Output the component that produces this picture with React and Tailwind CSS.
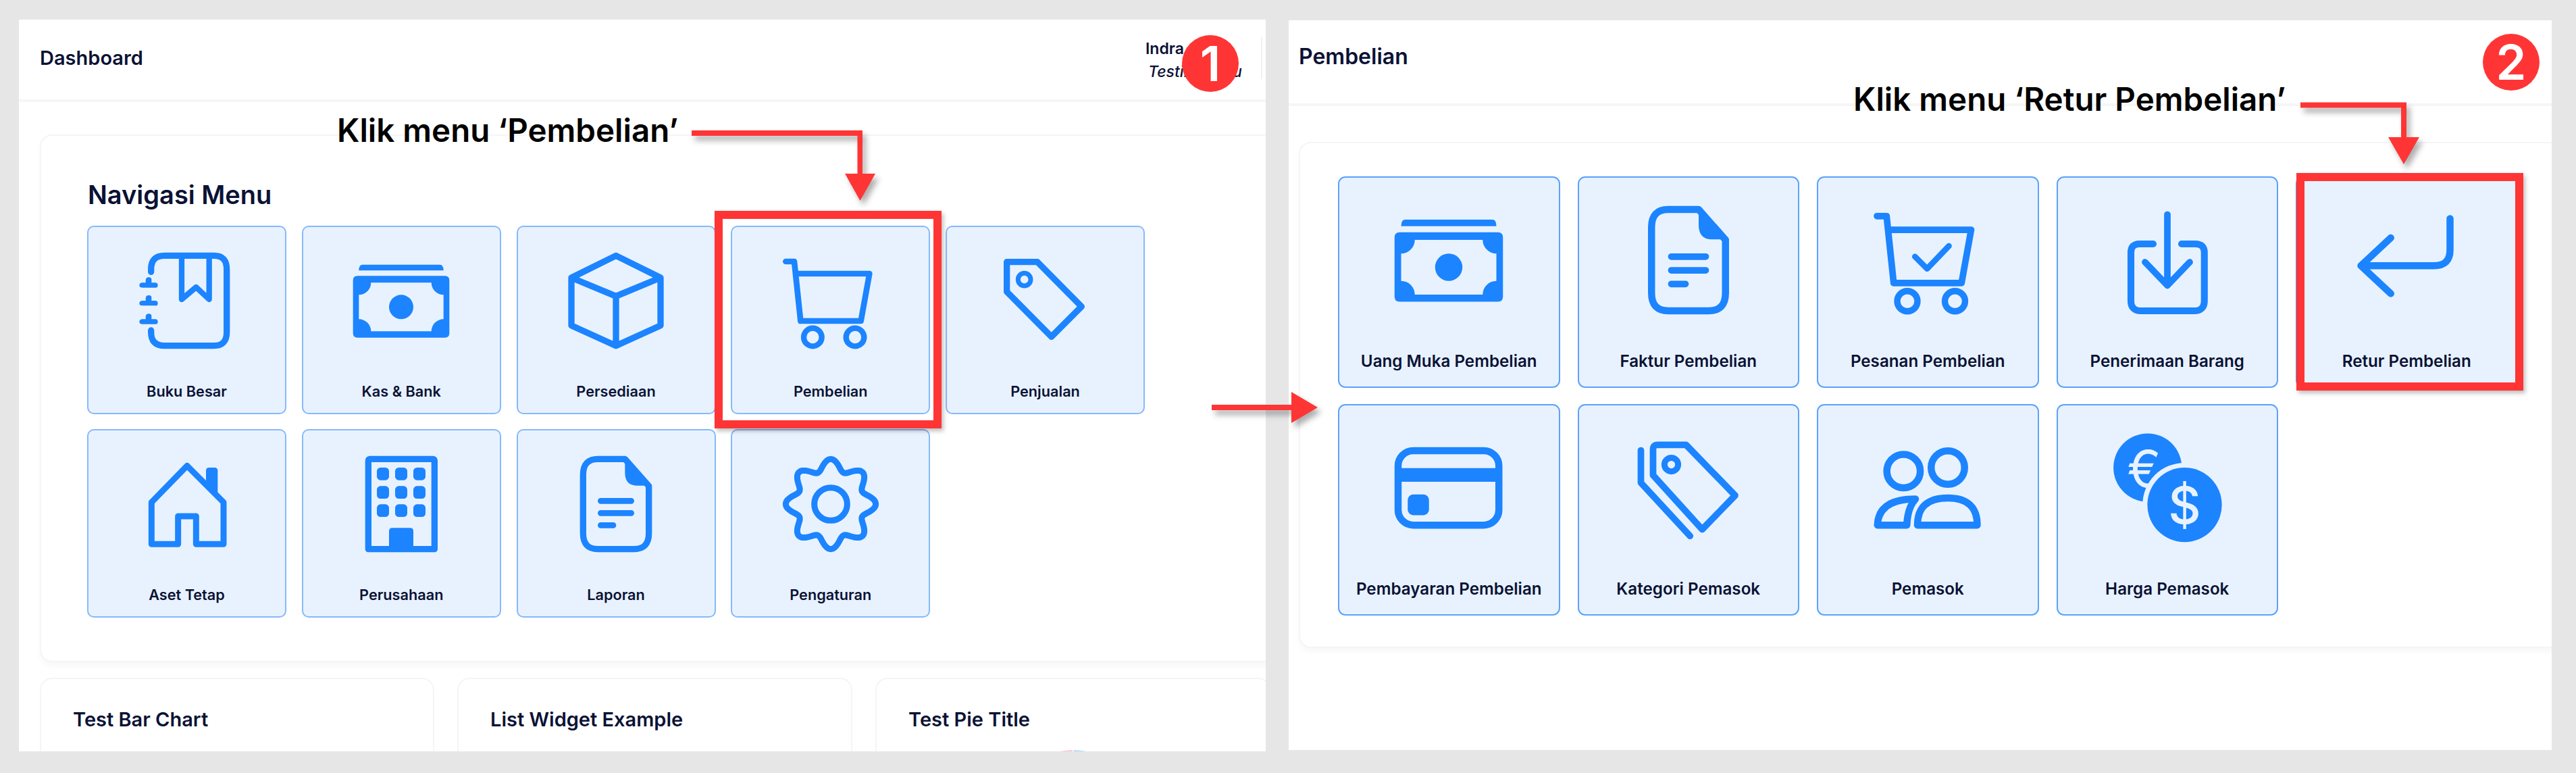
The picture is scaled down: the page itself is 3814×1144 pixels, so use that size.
import React from 'react';

const INK = 'text-[#0b1235]';

// gear outline, 8 soft lobes
const gearPath = () => {
  const pts = [];
  for (let i = 0; i < 144; i++) {
    const t = (i / 144) * Math.PI * 2;
    const r = 8.75 + 1.25 * Math.cos(8 * t);
    pts.push(`${(12 + r * Math.sin(t)).toFixed(2)} ${(12 - r * Math.cos(t)).toFixed(2)}`);
  }
  return `M${pts.join('L')}Z`;
};

const Svg = ({ size, children }) => (
  <svg
    viewBox="0 0 24 24"
    width={size}
    height={size}
    fill="none"
    stroke="currentColor"
    strokeWidth="1.4"
    strokeLinecap="round"
    strokeLinejoin="round"
    className="shrink-0 text-[#1c84ff]"
  >
    {children}
  </svg>
);

const Solid = (props) => <path fill="currentColor" stroke="none" {...props} />;

const money = (
  <>
    <Solid d="M3.4 4H20.6Q21.4 4 21.4 5.3H2.6Q2.6 4 3.4 4Z" />
    <Solid
      fillRule="evenodd"
      d="M2.3 6.5H21.7Q22.7 6.5 22.7 7.5V19.2Q22.7 20.2 21.7 20.2H2.3Q1.3 20.2 1.3 19.2V7.5Q1.3 6.5 2.3 6.5ZM5.3 8H18.7A2.7 2.7 0 0 0 21.4 10.7V16.1A2.7 2.7 0 0 0 18.7 18.8H5.3A2.7 2.7 0 0 0 2.6 16.1V10.7A2.7 2.7 0 0 0 5.3 8Z"
    />
    <circle cx="12" cy="13.4" r="2.7" fill="currentColor" stroke="none" />
  </>
);

const doc = (
  <>
    <path d="M8 2H14L19.3 8V18.5Q19.3 22 16 22H8Q4.7 22 4.7 18.5V5.5Q4.7 2 8 2Z" />
    <Solid d="M14 1.4L20 7.9H16.6Q14 7.9 14 5Z" />
    <path strokeWidth="1.3" d="M8.6 11.3H15.4M8.6 14H15.4M8.6 16.7H11.4" />
  </>
);

const cartBody = (
  <>
    <path strokeWidth="1.3" d="M2 3.3H3.9L5.3 16.5H18.7L20.6 6H4.6" />
    <circle cx="8" cy="20.1" r="2" strokeWidth="1.25" />
    <circle cx="17.4" cy="20.1" r="2" strokeWidth="1.25" />
  </>
);

const icons = {
  book: (
    <>
      <path d="M4 5.6V5Q4 2 7 2H18Q20.8 2 20.8 5V19Q20.8 22 18 22H7Q4 22 4 19V18.6" />
      <path strokeWidth="1.25" d="M10.8 2V11.7L14 9L16.9 11.7V2" />
      <Solid d="M2.8 8V7.5Q2.8 6.8 3.5 6.8T4.1 7.5V8H4.9Q5.5 8 5.5 8.6T4.9 9.1H2Q1.4 9.1 1.4 8.6T2 8Z" />
      <Solid d="M2.8 12V11.5Q2.8 10.8 3.5 10.8T4.1 11.5V12H4.9Q5.5 12 5.5 12.6T4.9 13.1H2Q1.4 13.1 1.4 12.6T2 12Z" />
      <Solid d="M2.8 16.1V15.6Q2.8 14.9 3.5 14.9T4.1 15.6V16.1H4.9Q5.5 16.1 5.5 16.7T4.9 17.2H2Q1.4 17.2 1.4 16.7T2 16.1Z" />
    </>
  ),
  money,
  box: <path strokeWidth="1.4" d="M12 2L21.9 6.9V17.5L12 22L2.1 17.5V6.9ZM2.1 6.9L12 11L21.9 6.9M12 11V22" />,
  cart: cartBody,
  tag: (
    <>
      <path d="M3.4 3.4H10.2L20 13.3L13.3 20L3.4 10Z" />
      <circle cx="7.3" cy="7.3" r="1.4" strokeWidth="1.05" />
    </>
  ),
  house: (
    <>
      <path strokeWidth="1.35" d="M4.1 11.6L12 3.5L20.1 11.6V20.9H14V14.7H10V20.9H4.1Z" />
      <Solid d="M16.2 4.6Q16.2 3.9 16.9 3.9H18.1Q18.8 3.9 18.8 4.6V10.5L16.2 8Z" />
    </>
  ),
  building: (
    <>
      <path strokeWidth="1.4" d="M5 2H19.1Q19.4 2 19.4 2.4V22H4.7V2.4Q4.7 2 5 2Z" />
      {[6.6, 10.65, 14.7].map((x) =>
        [3.9, 8, 12.05].map((y) => <rect key={`${x}-${y}`} x={x} y={y} width="2.7" height="2.8" rx="0.8" fill="currentColor" stroke="none" />)
      )}
      <Solid d="M9.3 22V18Q9.3 17.3 10 17.3H14Q14.7 17.3 14.7 18V22Z" />
    </>
  ),
  doc,
  gear: (
    <>
      <path strokeWidth="1.35" d={gearPath()} />
      <circle cx="12" cy="12" r="3.65" strokeWidth="1.35" />
    </>
  ),
  cartCheck: (
    <>
      {cartBody}
      <path strokeWidth="1.15" d="M9.5 11.3L11.9 13.7L16.2 9.2" />
    </>
  ),
  inbox: (
    <>
      <path strokeWidth="1.3" d="M12 3V17L7.6 12.4M12 17L16.4 12.4" />
      <path strokeWidth="1.35" d="M9.2 8.8H6.5Q4.8 8.8 4.8 10.5V20Q4.8 22 6.8 22H17.3Q19.3 22 19.3 20V10.5Q19.3 8.8 17.5 8.8H14.8" />
    </>
  ),
  retur: <path strokeWidth="1.4" d="M20.6 3.8V10Q20.6 13.1 17.4 13.1H3M8.9 7.6L3 13.1L8.9 18.6" />,
  card: (
    <>
      <rect x="2" y="4.65" width="19.9" height="14.7" rx="3" />
      <Solid d="M1.4 8.1H22.5V10.8H1.4Z" />
      <rect x="3.9" y="13.3" width="4.2" height="4.1" rx="1.1" fill="currentColor" stroke="none" />
    </>
  ),
  tags: (
    <>
      <path strokeWidth="1.3" d="M5 4.4Q5 3.5 5.9 3.5H11.5L21.2 13.5L14.7 20.2L5 9.5Z" />
      <circle cx="8.6" cy="7.4" r="1.35" strokeWidth="1.2" />
      <path strokeWidth="1.3" d="M2.6 4.6V11L12.3 21.5" />
    </>
  ),
  users: (
    <>
      <circle cx="7.25" cy="8.7" r="3.3" />
      <circle cx="16" cy="8" r="3.3" />
      <path d="M10 19.35Q10 14 16 14Q21.8 14 21.8 19.35Z" />
      <path d="M2.1 19.35Q2.3 14.2 9.6 14.2Q8 16 7.9 19.35Z" />
    </>
  ),
  coins: (
    <>
      <circle cx="8.1" cy="8" r="6.75" fill="currentColor" stroke="none" />
      <text x="7.4" y="11.9" textAnchor="middle" fontSize="10" fontWeight="400" fill="#e8f2ff" stroke="none" fontFamily="Inter, sans-serif">€</text>
      <circle cx="15.4" cy="15.35" r="8.3" fill="#e8f2ff" stroke="none" />
      <circle cx="15.4" cy="15.35" r="7.35" fill="currentColor" stroke="none" />
      <text x="15.4" y="19" textAnchor="middle" fontSize="10" fontWeight="500" fill="#e8f2ff" stroke="none" fontFamily="Inter, sans-serif">$</text>
    </>
  ),
};

const dashMenu = [
  ['Buku Besar', 'book'],
  ['Kas & Bank', 'money'],
  ['Persediaan', 'box'],
  ['Pembelian', 'cart'],
  ['Penjualan', 'tag'],
  ['Aset Tetap', 'house'],
  ['Perusahaan', 'building'],
  ['Laporan', 'doc'],
  ['Pengaturan', 'gear'],
];

const buyMenu = [
  ['Uang Muka Pembelian', 'money'],
  ['Faktur Pembelian', 'doc'],
  ['Pesanan Pembelian', 'cartCheck'],
  ['Penerimaan Barang', 'inbox'],
  ['Retur Pembelian', 'retur'],
  ['Pembayaran Pembelian', 'card'],
  ['Kategori Pemasok', 'tags'],
  ['Pemasok', 'users'],
  ['Harga Pemasok', 'coins'],
];

const DashTile = ({ label, icon }) => (
  <div className="h-[279px] flex flex-col items-center rounded-[10px] border-2 border-[#86b9fb] bg-[#e8f2ff] pt-[29px]">
    <Svg size={160}>{icons[icon]}</Svg>
    <span className={`mt-[40px] text-[21.7px] leading-[28px] font-semibold ${INK}`}>{label}</span>
  </div>
);

const BuyTile = ({ label, icon }) => (
  <div className="h-[313px] flex flex-col items-center rounded-[11px] border-2 border-[#5ca2fb] bg-[#e8f2ff] pt-[32px]">
    <Svg size={180}>{icons[icon]}</Svg>
    <span className={`mt-[44px] text-[24.2px] leading-[32px] font-semibold ${INK}`}>{label}</span>
  </div>
);

const Widget = ({ title, children }) => (
  <div className="h-[300px] rounded-t-[18px] border-2 border-[#f5f5f6] bg-white pl-[47px] pt-[42px]">
    <h3 className={`text-[29px] leading-[36px] font-semibold ${INK}`}>{title}</h3>
    {children}
  </div>
);

const ArrowShadow = 'drop-shadow-[5px_7px_4px_rgba(0,0,0,0.32)]';

const App = () => {
  return (
    <div className="relative h-[1144px] w-full overflow-hidden bg-[#e6e6e6] font-['Inter',sans-serif]">
      <div className="flex items-start gap-[34px] pl-[28px] pt-[29px]">
        {/* left screen: dashboard */}
        <section className="h-[1083px] w-[1846px] shrink-0 overflow-hidden bg-white">
          <header className="flex h-[122px] items-center justify-between border-b-[4px] border-[#f6f6f7] pb-[4px] pl-[31px]">
            <h1 className={`text-[29px] leading-[36px] font-semibold ${INK}`}>Dashboard</h1>
            <div className="flex h-[62px] items-stretch">
              <div className={`w-[141px] text-[23px] leading-[34px] ${INK}`}>
                <p className="font-semibold">Indra</p>
                <p className="ml-[4px] font-medium italic whitespace-nowrap">Testing Baru</p>
              </div>
              <div className="ml-[30px] mr-[5px] w-[2px] bg-[#f1f1f3]" />
            </div>
          </header>
          <main className="pl-[31px] pt-[48px]">
            <div className="h-[781px] w-[1900px] rounded-[18px] border-2 border-[#f5f5f6] bg-white pl-[68px] pt-[62px] shadow-[0_6px_10px_rgba(0,0,0,0.03)]">
              <h2 className={`ml-px text-[38px] leading-[50px] font-semibold ${INK}`}>Navigasi Menu</h2>
              <div className="mt-[21px] grid grid-cols-[repeat(5,295px)] gap-x-[22.75px] gap-y-[22px]">
                {dashMenu.map(([label, icon]) => (
                  <DashTile key={label} label={label} icon={icon} />
                ))}
              </div>
            </div>
            <div className="mt-[23px] grid w-[1900px] grid-cols-[584px_585px_585px] gap-x-[34px]">
              <Widget title="Test Bar Chart" />
              <Widget title="List Widget Example" />
              <Widget title="Test Pie Title">
                <svg className="ml-[164px] mt-[27px]" width="160" height="160" viewBox="0 0 160 160">
                  <path d="M79 80V0A80 80 0 0 0 79 160Z" fill="#ffc4d0" />
                  <path d="M81 80V0A80 80 0 0 1 81 160Z" fill="#b0d8f8" />
                </svg>
              </Widget>
            </div>
          </main>
        </section>

        {/* right screen: pembelian */}
        <section className="mt-px h-[1080px] w-[1870px] shrink-0 overflow-hidden bg-white">
          <header className="flex h-[127px] items-center border-b-[4px] border-[#f6f6f7] pb-[15px] pl-[15px]">
            <h1 className={`text-[32px] leading-[40px] font-semibold ${INK}`}>Pembelian</h1>
          </header>
          <main className="pl-[15px] pt-[53px]">
            <div className="h-[749px] w-[1900px] rounded-[18px] border-2 border-[#f5f5f6] bg-white pl-[56px] pt-[49px] shadow-[0_6px_10px_rgba(0,0,0,0.03)]">
              <div className="grid grid-cols-[repeat(5,328.5px)] gap-x-[26px] gap-y-[24px]">
                {buyMenu.map(([label, icon]) => (
                  <BuyTile key={label} label={label} icon={icon} />
                ))}
              </div>
            </div>
          </main>
        </section>
      </div>

      {/* annotations on top of the screenshots */}
      <p className="absolute left-[499px] top-[165px] whitespace-nowrap text-[47.5px] leading-[56px] font-semibold text-black">Klik menu ‘Pembelian’</p>
      <p className="absolute left-[2744px] top-[119px] whitespace-nowrap text-[47.5px] leading-[56px] font-semibold text-black">Klik menu ‘Retur Pembelian’</p>

      <div className="absolute left-[1058px] top-[312px] h-[322px] w-[336px] border-[12px] border-[#ff3535] shadow-[3px_4px_6px_rgba(0,0,0,0.25)]" />
      <div className="absolute left-[3400px] top-[256px] h-[322px] w-[336px] border-[12px] border-[#ff3535] shadow-[3px_4px_6px_rgba(0,0,0,0.25)]" />

      <svg className={`absolute left-[1024px] top-[190px] ${ArrowShadow}`} width="276" height="110" viewBox="0 0 276 110" fill="#ff3535">
        <path d="M0 3H253V67H272L249.5 107L227 67H245.5V11H0Z" />
      </svg>
      <svg className={`absolute left-[3406px] top-[148px] ${ArrowShadow}`} width="180" height="98" viewBox="0 0 180 98" fill="#ff3535">
        <path d="M0 3.5H157V55H176L153 95L130 55H149V11.5H0Z" />
      </svg>
      <svg className={`absolute left-[1794px] top-[578px] ${ArrowShadow}`} width="160" height="50" viewBox="0 0 160 50" fill="#ff3535">
        <path d="M0 21H118V2L157 25L118 48V29H0Z" />
      </svg>

      <div className="absolute left-[1750px] top-[52px] flex h-[84px] w-[84px] items-center justify-center rounded-full bg-[#ff3535] text-[72px] leading-none font-semibold text-white">1</div>
      <div className="absolute left-[3676px] top-[50px] flex h-[84px] w-[84px] items-center justify-center rounded-full bg-[#ff3535] text-[72px] leading-none font-semibold text-white">2</div>
    </div>
  );
};

export default App;
